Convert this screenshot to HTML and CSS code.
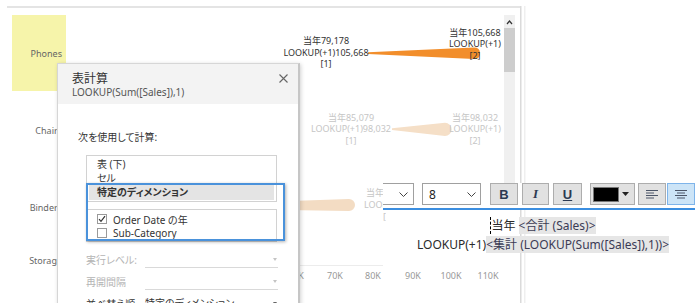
FILE: index.html
```html
<html>
<head>
    <meta content="text/html;charset=utf-8" http-equiv="Content-Type"/>
    <link rel="stylesheet" href="styles.css">
</head>
<body>
<div class="view">
    <svg class="chart" width="526" height="303" viewBox="0 0 526 303">
        <defs>
            <clipPath id="cut"><rect x="0" y="0" width="386" height="303"/></clipPath>
        </defs>
        <!-- frame and scrollbar -->
        <rect x="7" y="6" width="514" height="2" fill="#e4e4e4"/>
        <rect x="520" y="6" width="1.5" height="297" fill="#dadada"/>
        <rect x="524" y="6" width="1.5" height="297" fill="#efefef"/>
        <rect x="504" y="15" width="11" height="170" fill="#f0f0f0"/>
        <polyline points="507,24 509.5,21 512,24" stroke="#333" stroke-width="1.2" fill="none"/>
        <rect x="504" y="28" width="11" height="44" fill="#cdcdcd"/>

        <!-- row headers -->
        <rect x="12" y="15" width="54" height="76" fill="#f6f4aa"/>
        <g class="row-label">
            <text x="62" y="56.5">Phones</text>
            <text x="62" y="133.5">Chairs</text>
            <text x="62" y="210.5">Binders</text>
            <text x="62" y="263.5">Storage</text>
        </g>

        <!-- marks -->
        <path d="M368,52.2 L474,47.5 Q480,47.5 480,53.2 Q480,59 474,59 L368,53.9 Z" fill="#f28e2b"/>
        <path d="M392,128.2 L445,122.8 A6.6,6.6 0 0 1 445,136 L392,129.9 Z" fill="#f5dfc7"/>
        <path d="M250,202.5 L349,199 A6,6 0 0 1 349,211 L250,209.5 Z" fill="#f3dcc3"/>

        <g class="mark-label">
            <text x="326" y="44">当年79,178</text>
            <text x="326" y="56">LOOKUP(+1)105,668</text>
            <text x="326" y="67">[1]</text>
            <text x="475" y="36">当年105,668</text>
            <text x="475" y="47">LOOKUP(+1)</text>
            <text x="475" y="59">[2]</text>
        </g>
        <g class="mark-label faded">
            <text x="351" y="121">当年85,079</text>
            <text x="351" y="132">LOOKUP(+1)98,032</text>
            <text x="351" y="144">[1]</text>
            <text x="475" y="121">当年98,032</text>
            <text x="475" y="132">LOOKUP(+1)</text>
            <text x="475" y="144">[2]</text>
        </g>
        <g class="mark-label faded start" clip-path="url(#cut)">
            <text x="366" y="196">当年79,178</text>
            <text x="364" y="208">LOOKUP(+1)</text>
            <text x="383" y="220">[1]</text>
        </g>

        <!-- axis -->
        <line x1="300" y1="265.5" x2="383" y2="265.5" stroke="#ececec"/>
        <g class="axis-label">
            <text x="296" y="279">60K</text>
            <text x="335" y="279">70K</text>
            <text x="373" y="279">80K</text>
            <text x="413" y="279">90K</text>
            <text x="451" y="279">100K</text>
            <text x="488" y="279">110K</text>
        </g>
    </svg>
</div>

<div class="calc-dialog">
    <div class="dialog-head">
        <div class="dialog-title">表計算</div>
        <div class="dialog-formula">LOOKUP(Sum([Sales]),1)</div>
        <svg class="dialog-close" width="9" height="9" viewBox="0 0 9 9">
            <path d="M0.5,0.5 L8.5,8.5 M8.5,0.5 L0.5,8.5" stroke="#666" stroke-width="1.1"/>
        </svg>
    </div>
    <div class="dialog-body">
        <div class="calc-label">次を使用して計算:</div>
        <div class="listbox">
            <div class="list-item">表 (下)</div>
            <div class="list-item">セル</div>
            <div class="list-item selected">特定のディメンション</div>
        </div>
        <div class="checklist">
            <div class="check-item">
                <span class="checkbox">
                    <svg width="8" height="8" viewBox="0 0 8 8"><polyline points="1,4.2 3,6.4 7,1.2" fill="none" stroke="#333" stroke-width="1.2"/></svg>
                </span>
                Order Date の年
            </div>
            <div class="check-item">
                <span class="checkbox"></span>
                Sub-Category
            </div>
        </div>
        <div class="setting disabled">
            <span class="setting-name">実行レベル:</span>
            <span class="select"><i class="arrow"></i></span>
        </div>
        <div class="setting disabled">
            <span class="setting-name">再開間隔</span>
            <span class="select"><i class="arrow"></i></span>
        </div>
        <div class="setting">
            <span class="setting-name">並べ替え順序</span>
            <span class="select">特定のディメンション<i class="arrow dark"></i></span>
        </div>
    </div>
    <div class="focus-ring"></div>
</div>

<div class="text-editor">
    <div class="toolbar">
        <div class="dropdown font-name">
            <svg width="9" height="5" viewBox="0 0 9 5"><polyline points="0.5,0.5 4.5,4.5 8.5,0.5" fill="none" stroke="#444"/></svg>
        </div>
        <div class="dropdown font-size">
            <span>8</span>
            <svg width="9" height="5" viewBox="0 0 9 5"><polyline points="0.5,0.5 4.5,4.5 8.5,0.5" fill="none" stroke="#444"/></svg>
        </div>
        <div class="btn btn-b">B</div>
        <div class="btn btn-i">I</div>
        <div class="btn btn-u">U</div>
        <div class="btn btn-color">
            <span class="swatch"></span>
            <svg width="7" height="4" viewBox="0 0 7 4"><polygon points="0,0 7,0 3.5,4" fill="#222"/></svg>
        </div>
        <div class="btn btn-left">
            <svg width="12" height="10" viewBox="0 0 12 10">
                <path d="M0,1.5 H12 M0,4 H8 M0,6.5 H12 M0,9 H8" stroke="#4b5568"/>
            </svg>
        </div>
        <div class="btn btn-center active">
            <svg width="12" height="10" viewBox="0 0 12 10">
                <path d="M0,1.5 H12 M2,4 H10 M0,6.5 H12 M2,9 H10" stroke="#4b5568"/>
            </svg>
        </div>
    </div>
    <div class="editor-text">
        <div><span class="caret"></span>当年 <span class="field">&lt;合計 (Sales)&gt;</span></div>
        <div>LOOKUP(+1)<span class="field">&lt;集計 (LOOKUP(Sum([Sales]),1))&gt;</span></div>
    </div>
</div>
</body>
</html>
```

FILE: styles.css
```css
body {
    margin: 0;
    width: 695px;
    height: 303px;
    overflow: hidden;
    position: relative;
    background: #ffffff;
    color: #333333;
    font-family: "Noto Sans", "Noto Sans CJK JP", sans-serif;
    font-feature-settings: "palt";
}
.chart {
    display: block;
}
.row-label text {
    font-size: 9px;
    fill: #666666;
    text-anchor: end;
}
.mark-label text {
    font-size: 9px;
    fill: #333333;
    text-anchor: middle;
}
.mark-label.faded text {
    fill: #c6c6c6;
}
.mark-label.start text {
    text-anchor: start;
}
.axis-label text {
    font-size: 9px;
    fill: #999999;
    text-anchor: middle;
}

/* table calculation dialog */
.calc-dialog {
    position: absolute;
    left: 57px;
    top: 63px;
    width: 240px;
    height: 260px;
    background: #ffffff;
    border: 1px solid #d6d6d6;
    border-right: 2px solid #c6c6c6;
    box-shadow: 1px 1px 4px rgba(0, 0, 0, 0.18);
}
.dialog-head {
    position: relative;
    height: 40px;
    box-sizing: border-box;
    padding: 7px 14px 0;
    background: #f3f3f3;
}
.dialog-title {
    font-size: 12px;
    line-height: 15px;
    color: #333333;
}
.dialog-formula {
    font-size: 10px;
    line-height: 13px;
    color: #555555;
}
.dialog-close {
    position: absolute;
    right: 10px;
    top: 10px;
}
.dialog-body {
    padding: 26px 0 0 20px;
    font-size: 10px;
}
.calc-label {
    line-height: 14px;
}
.listbox, .checklist {
    width: 191px;
    box-sizing: border-box;
    margin-left: 8px;
    border: 1px solid #d2d2d2;
}
.listbox {
    margin-top: 11px;
    height: 47px;
    padding: 1px 2px;
}
.list-item {
    height: 14px;
    line-height: 14px;
    padding-left: 8px;
}
.list-item.selected {
    height: 15px;
    line-height: 15px;
    background: #e4e4e4;
    font-weight: bold;
}
.checklist {
    margin-top: 7px;
    padding: 2px 2px 1px;
}
.check-item {
    display: flex;
    align-items: center;
    height: 14px;
    padding-left: 8px;
}
.checkbox {
    display: flex;
    align-items: center;
    justify-content: center;
    width: 10px;
    height: 10px;
    box-sizing: border-box;
    border: 1px solid #9a9a9a;
    margin-right: 6px;
    background: #ffffff;
}
.setting {
    display: flex;
    width: 192px;
    height: 20px;
    line-height: 20px;
    margin: 2px 0 0 8px;
}
.checklist + .setting {
    margin-top: 8px;
}
.setting-name {
    width: 59px;
    flex: none;
}
.select {
    position: relative;
    flex: 1;
    height: 17px;
    line-height: 18px;
    border-bottom: 1px solid #d9d9d9;
}
.setting.disabled {
    color: #b4b4b4;
}
.arrow {
    position: absolute;
    right: 1px;
    top: 8px;
    border-left: 2.5px solid transparent;
    border-right: 2.5px solid transparent;
    border-top: 3px solid #c4c4c4;
}
.arrow.dark {
    border-top-color: #666666;
}
.focus-ring {
    position: absolute;
    left: 28px;
    top: 119px;
    width: 199px;
    height: 58px;
    box-sizing: border-box;
    border: 2px solid #4a92db;
    box-shadow: 1px 1px 3px rgba(0, 0, 0, 0.3);
}

/* label text editor */
.text-editor {
    position: absolute;
    left: 383px;
    top: 183px;
    width: 312px;
}
.toolbar {
    display: flex;
    height: 22px;
    padding-bottom: 3px;
    border-bottom: 2px solid #3b8ee0;
    background: #ffffff;
}
.dropdown {
    display: flex;
    align-items: center;
    height: 22px;
    box-sizing: border-box;
    border: 1px solid #a0a0a0;
    background: #ffffff;
}
.font-name {
    width: 31px;
    border-left: none;
    justify-content: flex-end;
    padding-right: 5px;
}
.font-size {
    width: 59px;
    margin-left: 8px;
    justify-content: space-between;
    padding: 0 4px 0 6px;
    font-size: 12px;
    color: #222222;
}
.btn {
    display: flex;
    align-items: center;
    justify-content: center;
    width: 28px;
    height: 22px;
    box-sizing: border-box;
    margin-left: 4px;
    border: 1px solid #adadad;
    background: #e1e1e1;
    color: #2c3a52;
    font-size: 13px;
}
.btn-b {
    margin-left: 9px;
    font-family: "Liberation Sans", sans-serif;
    font-weight: bold;
}
.btn-i {
    width: 27px;
    font-family: "Liberation Serif", serif;
    font-style: italic;
    font-weight: bold;
}
.btn-u {
    width: 29px;
    font-family: "Liberation Sans", sans-serif;
    font-weight: bold;
    text-decoration: underline;
}
.btn-color {
    width: 45px;
    margin-left: 8px;
    justify-content: flex-start;
    padding-left: 2px;
    gap: 3px;
}
.swatch {
    width: 24px;
    height: 13px;
    background: #000000;
    border: 1px solid #777777;
}
.btn-left {
    margin-left: 3px;
}
.btn-center {
    margin-left: 1px;
}
.btn.active {
    background: #cce4f7;
    border-color: #7eb4ea;
}
.editor-text {
    padding: 6px 0 0 8px;
    text-align: center;
    font-size: 12px;
    line-height: 19px;
    color: #2a2a2a;
}
.field {
    background: #e6e6e6;
    color: #3b3b55;
}
.caret {
    display: inline-block;
    height: 17px;
    vertical-align: -4px;
    border-left: 1px dashed #000000;
}
```
